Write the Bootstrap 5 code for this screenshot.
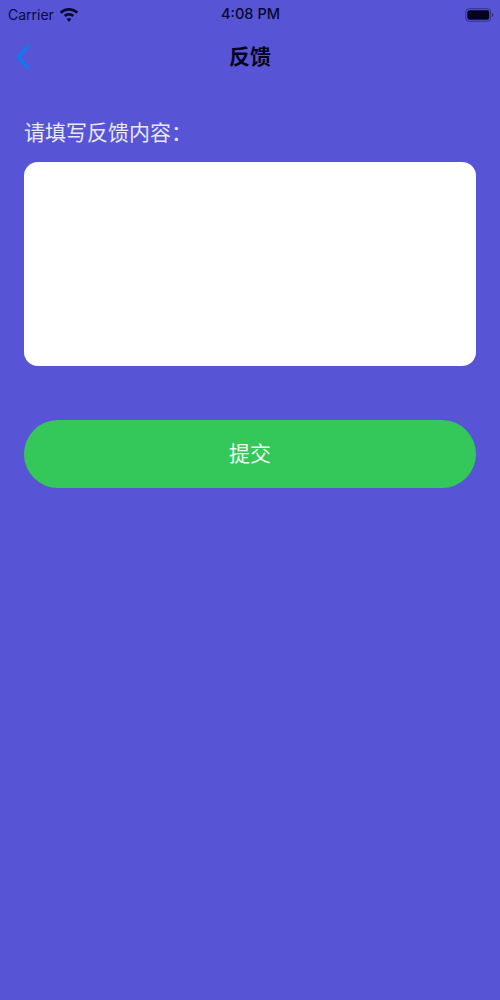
<!DOCTYPE html>
<html lang="zh">
<head>
<meta charset="utf-8">
<title>反馈</title>
<link href="https://cdn.jsdelivr.net/npm/bootstrap@5.3.0/dist/css/bootstrap.min.css" rel="stylesheet">
<style>
html, body { height: 100%; }
body { background: #5755d5; font-family: Inter, "Noto Sans CJK SC", sans-serif; }
.status-row { height: 30px; padding: 0 6px 1px 8px; color: #0a0a3c; font-size: 14px; }
.status-side { width: 150px; }
.status-time { font-weight: 500; font-size: 14.6px; color: #08082e; padding-right: 1px; }
.wifi-mark { margin-left: 1px; }
.head-row { height: 50px; }
.head-title { font-size: 21px; font-weight: 700; color: #050520; line-height: 1; font-family: "Noto Sans CJK SC", sans-serif; }
.back-link { left: 15px; top: 13px; line-height: 0; }
.body-pad { padding: 0 24px; }
.field-label { font-size: 21px; line-height: 30px; color: #e8e8f8; margin: 36px 0 16px; font-family: "Noto Sans CJK SC", sans-serif; font-weight: 400; }
.feedback-box { height: 204px; border: 0; border-radius: 14px; resize: none; }
.submit-btn { height: 68px; margin-top: 54px; border-radius: 34px; background: #34c759; border: 0; color: #f0fff4; font-size: 21px; padding-bottom: 8px; font-family: "Noto Sans CJK SC", sans-serif; }
.submit-btn:hover { background: #34c759; color: #f0fff4; }
</style>
</head>
<body>
<div class="d-flex align-items-center justify-content-between status-row">
  <div class="d-flex align-items-center gap-1 status-side">
    <span>Carrier</span>
    <svg class="wifi-mark" width="20" height="16" viewBox="0 0 20 16" aria-hidden="true"><path fill="#08082e" d="M10 1C6.400 1 3.200 2.400.8 4.700l1.900 2C4.600 4.900 7.200 3.800 10 3.800s5.400 1.100 7.300 2.900l1.900-2C16.800 2.400 13.600 1 10 1zm0 5c-2 0-3.900.8-5.200 2.100l1.900 2c.9-.8 2-1.300 3.300-1.300s2.400.5 3.300 1.300l1.900-2C13.900 6.800 12 6 10 6zm0 5c-.9 0-1.700.3-2.300.9l2.300 3 2.300-3c-.6-.6-1.400-.9-2.300-.9z"/></svg>
  </div>
  <span class="status-time">4:08 PM</span>
  <div class="d-flex justify-content-end align-items-center status-side">
    <svg width="29" height="16" viewBox="0 0 29 16" aria-hidden="true"><rect x=".7" y="1.700" width="25" height="12.600" rx="3.500" fill="none" stroke="#08082e" stroke-opacity=".45" stroke-width="1"/><rect x="2.300" y="3.200" width="22" height="9.600" rx="2.200" fill="#04041e"/><path d="M27 6v4c.9-.3 1.300-1.100 1.300-2S27.900 6.300 27 6z" fill="#08082e" fill-opacity=".5"/></svg>
  </div>
</div>
<div class="position-relative d-flex align-items-center justify-content-center head-row">
  <a href="#" class="position-absolute back-link" aria-label="返回">
    <svg width="16" height="28" viewBox="0 0 16 28" aria-hidden="true"><path d="M13.500 2.500 3.500 14 13.500 25.500" fill="none" stroke="#0a7cf0" stroke-width="3.400"/></svg>
  </a>
  <span class="head-title">反馈</span>
</div>
<main class="body-pad">
  <label for="fb" class="d-block field-label">请填写反馈内容：</label>
  <textarea id="fb" class="form-control feedback-box"></textarea>
  <button type="button" class="btn w-100 d-block submit-btn">提交</button>
</main>
<script src="https://cdn.jsdelivr.net/npm/bootstrap@5.3.0/dist/js/bootstrap.bundle.min.js"></script>
</body>
</html>
